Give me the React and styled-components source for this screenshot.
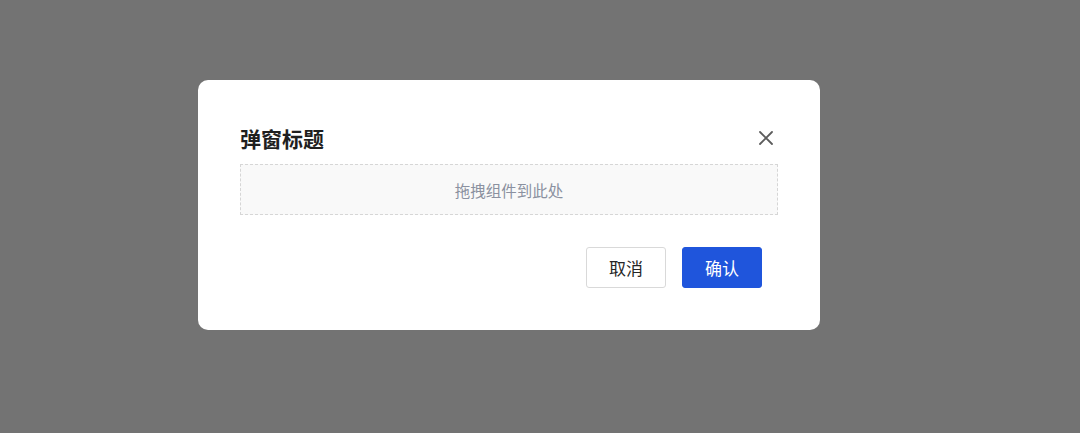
import styled, { createGlobalStyle } from "styled-components";

const GlobalStyle = createGlobalStyle`
  html, body {
    margin: 0;
    padding: 0;
    background: #737373;
  }
  body {
    font-family: "Noto Sans CJK SC", "Noto Sans", sans-serif;
  }
`;

const Overlay = styled.div`
  width: 1080px;
  height: 433px;
  background: #737373;
  display: flex;
  align-items: flex-start;
  padding-top: 80px;
  padding-left: 198px;
  box-sizing: border-box;
`;

const Dialog = styled.div`
  width: 622px;
  height: 250px;
  box-sizing: border-box;
  background: #ffffff;
  border-radius: 10px;
  padding: 44px 42px 42px 42px;
  display: flex;
  flex-direction: column;
`;

const Header = styled.div`
  display: flex;
  align-items: center;
  justify-content: space-between;
  height: 28px;
`;

const Title = styled.h2`
  margin: 0;
  font-size: 21px;
  font-weight: 700;
  line-height: 28px;
  color: #1f1f1f;
`;

const CloseButton = styled.button`
  width: 24px;
  height: 24px;
  padding: 0;
  border: none;
  background: transparent;
  display: flex;
  align-items: center;
  justify-content: center;
  color: #5c5c5c;
  cursor: pointer;
`;

const DropZone = styled.div`
  margin-top: 12px;
  height: 51px;
  box-sizing: border-box;
  border: 1px dashed #d6d6d6;
  background: #f9f9f9;
  display: flex;
  align-items: center;
  justify-content: center;
  font-size: 15.5px;
  color: #8b91a0;
`;

const Footer = styled.div`
  margin-top: 32px;
  display: flex;
  justify-content: flex-end;
  gap: 16px;
  padding-right: 16px;
`;

const Button = styled.button`
  width: 80px;
  height: 41px;
  box-sizing: border-box;
  border-radius: 3px;
  font-family: inherit;
  font-size: 17px;
  cursor: pointer;
  border: 1px solid ${({ $primary }) => ($primary ? "#1f55dc" : "#d9d9d9")};
  background: ${({ $primary }) => ($primary ? "#1f55dc" : "#ffffff")};
  color: ${({ $primary }) => ($primary ? "#ffffff" : "#262626")};
`;

export default function App() {
  return (
    <>
      <GlobalStyle />
      <Overlay>
        <Dialog>
          <Header>
            <Title>弹窗标题</Title>
            <CloseButton aria-label="关闭">
              <svg width="14" height="14" viewBox="0 0 14 14" fill="none">
                <path d="M1 1L13 13M13 1L1 13" stroke="currentColor" strokeWidth="1.8" strokeLinecap="round" />
              </svg>
            </CloseButton>
          </Header>
          <DropZone>拖拽组件到此处</DropZone>
          <Footer>
            <Button>取消</Button>
            <Button $primary>确认</Button>
          </Footer>
        </Dialog>
      </Overlay>
    </>
  );
}
